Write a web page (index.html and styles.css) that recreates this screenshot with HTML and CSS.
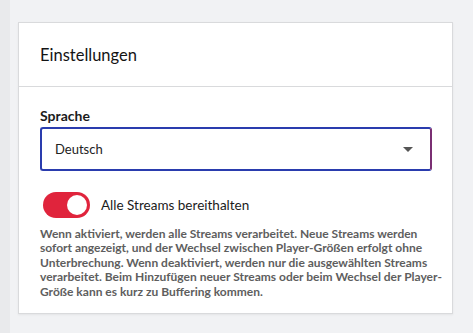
FILE: index.html
```html
<!DOCTYPE html>
<html lang="de">
<head>
    <meta charset="UTF-8">
    <meta name="viewport" content="width=device-width, initial-scale=1.0">
    <title>Einstellungen</title>
    <link rel="stylesheet" href="styles.css">
</head>
<body>
    <div class="layout">
        <div class="side-strip"></div>
        <main class="content">
            <section class="card">
                <div class="card-header">
                    <h2>Einstellungen</h2>
                </div>
                <div class="card-body">
                    <label class="field-label" for="language">Sprache</label>
                    <div class="select-box">
                        <span class="select-value">Deutsch</span>
                        <span class="select-arrow"></span>
                    </div>

                    <div class="toggle-row">
                        <span class="toggle on"><span class="knob"></span></span>
                        <span class="toggle-label">Alle Streams bereithalten</span>
                    </div>

                    <p class="hint">Wenn aktiviert, werden alle Streams verarbeitet. Neue Streams werden<br>
                        sofort angezeigt, und der Wechsel zwischen Player-Größen erfolgt ohne<br>
                        Unterbrechung. Wenn deaktiviert, werden nur die ausgewählten Streams<br>
                        verarbeitet. Beim Hinzufügen neuer Streams oder beim Wechsel der Player-<br>
                        Größe kann es kurz zu Buffering kommen.</p>
                </div>
            </section>
        </main>
    </div>
</body>
</html>
```

FILE: styles.css
```css
body {
    font-family: 'Lato', 'Open Sans', sans-serif;
    background: #f1f2f4;
    color: #1b1b1b;
    margin: 0;
    padding: 0;
}

.layout {
    display: flex;
    min-height: 333px;
}

.side-strip {
    width: 10px;
    flex-shrink: 0;
    background: #e9eaec;
}

.content {
    flex: 1;
    min-width: 0;
    padding: 22px 20px 0 8px;
}

.card {
    background: #ffffff;
    border: 1px solid #d9dadc;
    box-shadow: 0 1px 2px rgba(0, 0, 0, 0.06);
}

.card-header {
    height: 63px;
    display: flex;
    align-items: center;
    padding: 0 21px;
    border-bottom: 1px solid #d9dadc;
}

.card-header h2 {
    margin: 0;
    font-size: 16.5px;
    font-weight: 400;
    color: #141414;
}

.card-body {
    padding: 20px 20px 14px 21px;
}

.field-label {
    display: block;
    font-size: 14px;
    font-weight: 700;
    color: #1b1b1b;
    margin-bottom: 3px;
}

.select-box {
    height: 40px;
    border: 2px solid #2a3cae;
    border-right-color: #7a2f73;
    border-radius: 3px;
    display: flex;
    align-items: center;
    justify-content: space-between;
    padding: 0 17px 0 13px;
}

.select-value {
    font-size: 13px;
    color: #222;
}

.select-arrow {
    width: 0;
    height: 0;
    border-left: 5px solid transparent;
    border-right: 5px solid transparent;
    border-top: 5px solid #555;
}

.toggle-row {
    display: flex;
    align-items: center;
    margin-top: 21px;
    padding-left: 3px;
}

.toggle {
    width: 47px;
    height: 26px;
    border-radius: 13px;
    background: #e0243c;
    display: flex;
    align-items: center;
    justify-content: flex-end;
    padding: 0 3px;
    box-sizing: border-box;
}

.knob {
    width: 20px;
    height: 20px;
    border-radius: 50%;
    background: #ffffff;
}

.toggle-label {
    margin-left: 11px;
    font-size: 13.5px;
    color: #1b1b1b;
}

.hint {
    margin: 9px -14px 0 0;
    font-size: 12px;
    line-height: 14.4px;
    font-weight: 700;
    color: #5e5e5e;
    white-space: nowrap;
}
```
